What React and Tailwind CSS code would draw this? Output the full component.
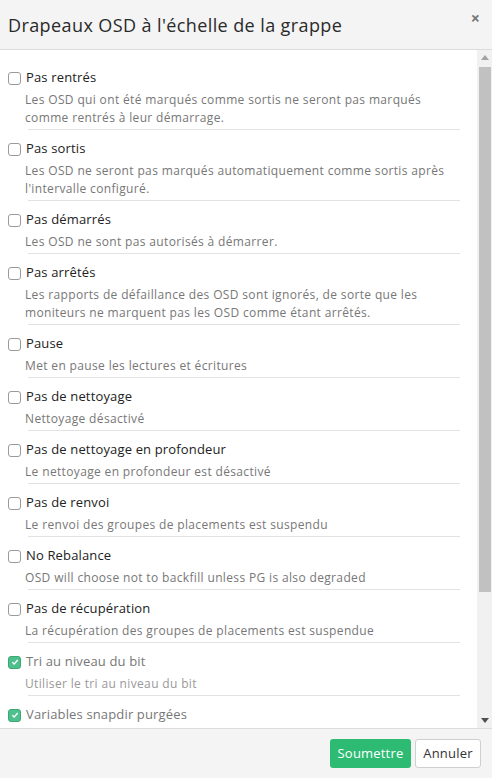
import React from 'react';

const flags = [
  { name: 'Pas rentrés', desc: 'Les OSD qui ont été marqués comme sortis ne seront pas marqués comme rentrés à leur démarrage.' },
  { name: 'Pas sortis', desc: "Les OSD ne seront pas marqués automatiquement comme sortis après l'intervalle configuré." },
  { name: 'Pas démarrés', desc: 'Les OSD ne sont pas autorisés à démarrer.' },
  { name: 'Pas arrêtés', desc: 'Les rapports de défaillance des OSD sont ignorés, de sorte que les moniteurs ne marquent pas les OSD comme étant arrêtés.' },
  { name: 'Pause', desc: 'Met en pause les lectures et écritures' },
  { name: 'Pas de nettoyage', desc: 'Nettoyage désactivé' },
  { name: 'Pas de nettoyage en profondeur', desc: 'Le nettoyage en profondeur est désactivé' },
  { name: 'Pas de renvoi', desc: 'Le renvoi des groupes de placements est suspendu' },
  { name: 'No Rebalance', desc: 'OSD will choose not to backfill unless PG is also degraded' },
  { name: 'Pas de récupération', desc: 'La récupération des groupes de placements est suspendue' },
  { name: 'Tri au niveau du bit', desc: 'Utiliser le tri au niveau du bit', checked: true },
  { name: 'Variables snapdir purgées', desc: 'Les OSD ont purgé les snapdirs', checked: true },
  { name: 'Suppressions de récupération', desc: 'Supprime les objets pendant la récupération', checked: true },
];

const Checkbox = ({ checked }) =>
  checked ? (
    <span className="flex h-[13px] w-[13px] shrink-0 items-center justify-center rounded-[3px] border border-[#3aa872] bg-[#4fc08d]">
      <svg width="8" height="8" viewBox="0 0 8 8">
        <path d="M1.3 4.2 L3.2 6 L6.7 2" fill="none" stroke="#fff" strokeWidth="1.3" />
      </svg>
    </span>
  ) : (
    <span className="h-[13px] w-[13px] shrink-0 rounded-[3px] border border-[#9a9a9a] bg-white" />
  );

export default function App() {
  return (
    <div className="flex h-[778px] w-[492px] flex-col bg-white" style={{ fontFamily: '"Open Sans", "Noto Sans", sans-serif' }}>
      <div className="flex h-[50px] shrink-0 items-center justify-between border-b border-[#dcdcdc] bg-[#f4f4f4] pl-2 pr-[12px]">
        <h4 className="text-[18px] leading-none tracking-[0.4px] text-[#2a2a2a]">Drapeaux OSD à l'échelle de la grappe</h4>
        <span className="-mt-[13px] text-[16px] font-bold text-[#777]">×</span>
      </div>
      <div className="flex h-[678px] shrink-0">
        <div className="flex-1 overflow-hidden pt-[9px]">
          {flags.map((f, i) => (
            <div key={i} className="pt-[9px]">
              <div className="flex h-5 items-center pl-2">
                <Checkbox checked={f.checked} />
                <span className={`ml-[5px] text-[13px] tracking-[0.15px] ${f.checked ? 'text-[#777]' : 'text-[#222]'}`}>{f.name}</span>
              </div>
              <div className={`mt-[3px] pl-[25px] pr-[17px] text-[12px] leading-[18px] tracking-[0.35px] ${f.checked ? 'text-[#999]' : 'text-[#777]'}`}>{f.desc}</div>
              <div className="ml-[28px] mt-[2px] w-[432px] border-b border-[#e2e2e2]" />
            </div>
          ))}
        </div>
        <div className="flex w-[15px] shrink-0 flex-col bg-[#f1f1f1]">
          <div className="flex h-[15px] items-center justify-center">
            <svg width="8" height="5" viewBox="0 0 8 5"><path d="M0 5 L4 0 L8 5 Z" fill="#a3a3a3" /></svg>
          </div>
          <div className="ml-[2px] mr-[1px] mt-[2px] h-[525px] bg-[#c1c1c1]" />
          <div className="flex-1" />
          <div className="flex h-[15px] items-center justify-center">
            <svg width="8" height="5" viewBox="0 0 8 5"><path d="M0 0 L8 0 L4 5 Z" fill="#505050" /></svg>
          </div>
        </div>
      </div>
      <div className="flex flex-1 items-center justify-end gap-[4px] border-t border-[#dcdcdc] bg-[#f4f4f4] pr-[11px]">
        <button className="h-[29px] w-[81px] rounded-[3px] bg-[#2dbb74] text-[13px] tracking-[0.2px] text-white">Soumettre</button>
        <button className="h-[29px] w-[66px] rounded-[3px] border border-[#cfcfcf] bg-white text-[13px] tracking-[0.2px] text-[#333]">Annuler</button>
      </div>
    </div>
  );
}
